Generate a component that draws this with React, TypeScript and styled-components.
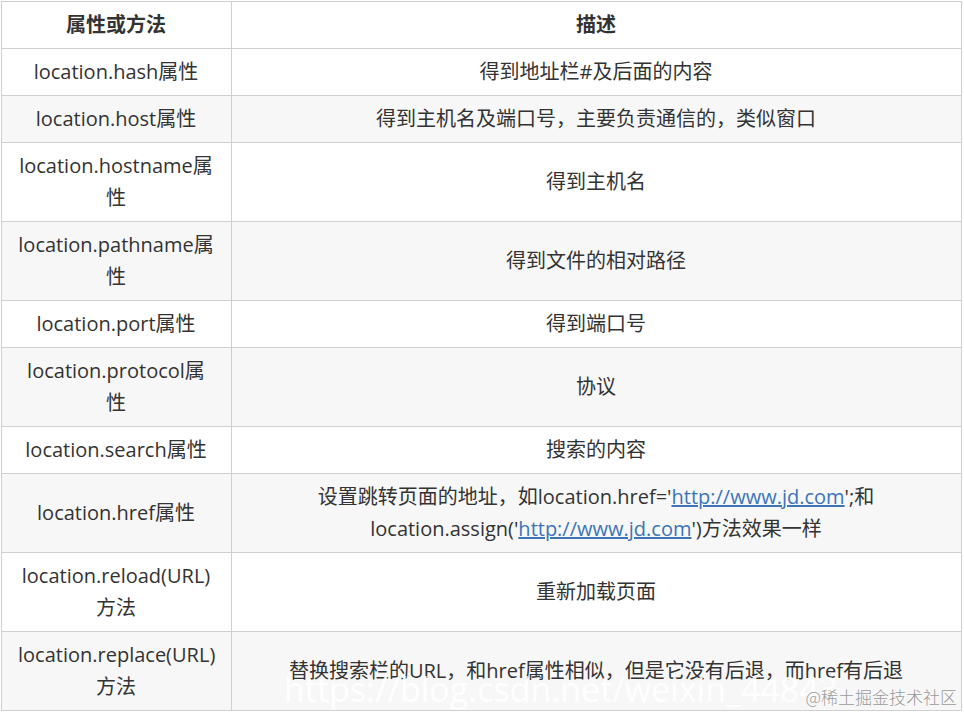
import React from "react";
import styled, { createGlobalStyle } from "styled-components";

const Global = createGlobalStyle`
  html, body { margin: 0; padding: 0; background: #fff; }
  body { padding: 1px; font-family: "Open Sans", "Noto Sans CJK SC", sans-serif; }
`;

const Wrap = styled.div`
  position: relative;
  width: 961px;
  overflow: hidden;
`;

const Table = styled.table`
  width: 961px;
  border-collapse: collapse;
  table-layout: fixed;
  font-family: "Open Sans", "Noto Sans CJK SC", sans-serif;
  font-size: 20px;
  line-height: 32px;
  color: #333;
`;

const Row = styled.tr<{ $alt?: boolean }>`
  background: ${(p) => (p.$alt ? "#f7f7f7" : "#fff")};
`;

const Th = styled.th<{ $w?: number }>`
  width: ${(p) => (p.$w ? `${p.$w}px` : "auto")};
  border: 1px solid #cfcfcf;
  padding: 7px 17px 7px 16px;
  font-weight: 700;
  text-align: center;
  color: #333;
`;

const Td = styled.td`
  border: 1px solid #cfcfcf;
  padding: 7px 17px 7px 16px;
  text-align: center;
  vertical-align: middle;
`;

const Link = styled.a`
  color: #3d74b8;
  text-decoration: underline;
`;

const Watermark = styled.div`
  position: absolute;
  left: 283px;
  top: 668px;
  font-family: "Open Sans", sans-serif;
  font-size: 34px;
  line-height: 40px;
  color: rgba(255, 255, 255, 0.95);
  white-space: nowrap;
  pointer-events: none;
`;

const Brand = styled.div`
  position: absolute;
  right: 5px;
  top: 685px;
  font-family: "Noto Sans CJK SC", sans-serif;
  font-weight: 300;
  font-size: 17px;
  line-height: 22px;
  color: #9a9a9a;
  white-space: nowrap;
`;

const rows: { k: string; v: React.ReactNode }[] = [
  { k: "location.hash属性", v: "得到地址栏#及后面的内容" },
  { k: "location.host属性", v: "得到主机名及端口号，主要负责通信的，类似窗口" },
  { k: "location.hostname属性", v: "得到主机名" },
  { k: "location.pathname属性", v: "得到文件的相对路径" },
  { k: "location.port属性", v: "得到端口号" },
  { k: "location.protocol属性", v: "协议" },
  { k: "location.search属性", v: "搜索的内容" },
  {
    k: "location.href属性",
    v: (
      <>
        设置跳转页面的地址，如location.href='<Link href="#">http://www.jd.com</Link>';和
        location.assign('<Link href="#">http://www.jd.com</Link>')方法效果一样
      </>
    ),
  },
  { k: "location.reload(URL)方法", v: "重新加载页面" },
  {
    k: "location.replace(URL)方法",
    v: "替换搜索栏的URL，和href属性相似，但是它没有后退，而href有后退",
  },
];

export default function App() {
  return (
    <Wrap>
      <Global />
      <Table>
        <thead>
          <Row>
            <Th $w={196}>属性或方法</Th>
            <Th>描述</Th>
          </Row>
        </thead>
        <tbody>
          {rows.map((r, i) => (
            <Row key={r.k} $alt={i % 2 === 1}>
              <Td>{r.k}</Td>
              <Td>{r.v}</Td>
            </Row>
          ))}
        </tbody>
      </Table>
      <Watermark>https://blog.csdn.net/weixin_44843</Watermark>
      <Brand>@稀土掘金技术社区</Brand>
    </Wrap>
  );
}
